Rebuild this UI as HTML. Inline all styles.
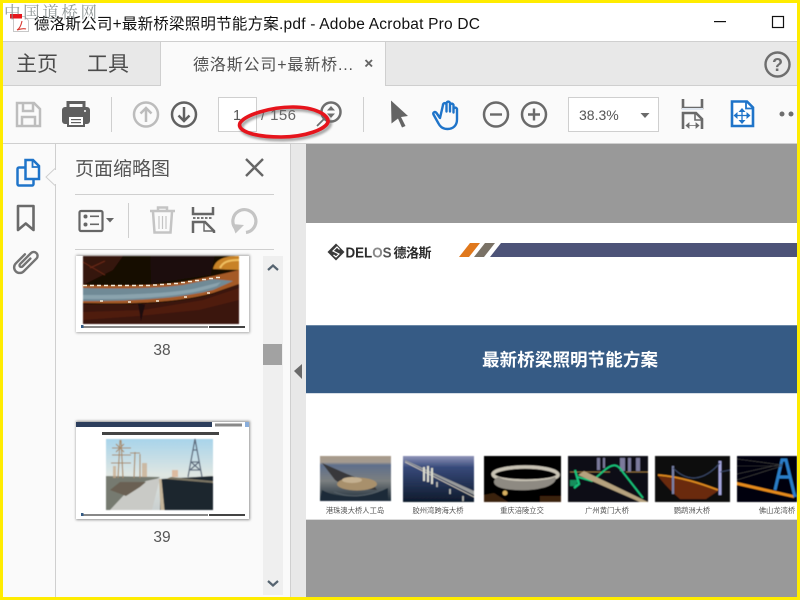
<!DOCTYPE html>
<html><head><meta charset="utf-8"><style>
html,body{margin:0;padding:0;width:800px;height:600px;overflow:hidden;background:#fff}
svg{display:block}
text{font-family:"Liberation Sans","Noto Sans CJK SC",sans-serif}
</style></head><body>
<svg width="800" height="600" viewBox="0 0 800 600" xmlns="http://www.w3.org/2000/svg">
<defs>
<filter id="b1" x="-10%" y="-10%" width="120%" height="120%"><feGaussianBlur stdDeviation="1.200"/></filter>
<filter id="b2" x="-20%" y="-20%" width="140%" height="140%"><feGaussianBlur stdDeviation="1"/></filter>
<filter id="b3" x="-20%" y="-20%" width="140%" height="140%"><feGaussianBlur stdDeviation=".6"/></filter>
<linearGradient id="sky" x1="0" y1="0" x2="0" y2="1"><stop offset="0" stop-color="#a8d4ea"/><stop offset=".5" stop-color="#dfe6e2"/><stop offset="1" stop-color="#c9cfcf"/></linearGradient>
<linearGradient id="sea" x1="0" y1="0" x2="0" y2="1"><stop offset="0" stop-color="#a89a8a"/><stop offset=".14" stop-color="#a39a90"/><stop offset=".2" stop-color="#5f6f8c"/><stop offset=".55" stop-color="#7b7f80"/><stop offset="1" stop-color="#1c2b38"/></linearGradient>
<linearGradient id="sea2" x1="0" y1="0" x2="0" y2="1"><stop offset="0" stop-color="#8f94b8"/><stop offset=".25" stop-color="#37497a"/><stop offset="1" stop-color="#0e1a2c"/></linearGradient>
</defs>

<rect width="800" height="600" fill="#fff"/>

<!-- tab bar -->
<rect x="3" y="41" width="794" height="1.500" fill="#cfcfcf"/>
<rect x="3" y="42" width="794" height="43" fill="#e8e8e8"/>
<rect x="160" y="42" width="226" height="44" fill="#fafafa"/>
<rect x="160" y="42" width="1" height="44" fill="#cfcfcf"/>
<rect x="385" y="42" width="1" height="44" fill="#cfcfcf"/>
<rect x="3" y="85" width="157" height="1" fill="#cfcfcf"/>
<rect x="386" y="85" width="411" height="1" fill="#cfcfcf"/>
<!-- toolbar -->
<rect x="3" y="86" width="794" height="57" fill="#fafafa"/>
<rect x="3" y="143" width="794" height="1" fill="#cfcfcf"/>

<!-- left nav + panel -->
<rect x="3" y="144" width="287" height="453" fill="#fafafa"/>
<rect x="55" y="144" width="1" height="453" fill="#cfcfcf"/>
<rect x="290" y="144" width="16" height="453" fill="#e8e8e8"/>
<rect x="290" y="144" width="1" height="453" fill="#cfcfcf"/>

<!-- doc area -->
<rect x="306" y="144" width="491" height="453" fill="#999"/>
<rect x="306" y="223" width="491" height="296" fill="#fff"/>
<rect x="306" y="519" width="491" height="1" fill="#dcdcdc"/>

<!-- title bar -->
<g>
<path d="M13.500 16.500h11l4 4v11h-15z" fill="#fff" stroke="#c8c8c8"/>
<rect x="10" y="14" width="12" height="4.500" fill="#e8161c"/>
<path d="M17 30c2-1 4-4 5-9M17 30c3-1 6-2 9-1" stroke="#d83a32" stroke-width="1.100" fill="none"/>
</g>
<text x="34" y="29" font-size="15.500" fill="#111" textLength="446" lengthAdjust="spacing">德洛斯公司+最新桥梁照明节能方案.pdf - Adobe Acrobat Pro DC</text>
<rect x="714" y="21" width="12" height="1.200" fill="#111"/>
<rect x="772.500" y="16.500" width="11" height="11" fill="none" stroke="#111" stroke-width="1.200"/>

<!-- tabs -->
<text x="16" y="71" font-size="21" fill="#4b4b4b">主页</text>
<text x="87" y="71" font-size="21" fill="#4b4b4b">工具</text>
<text x="193" y="70" font-size="16" fill="#505050" textLength="160" lengthAdjust="spacing">德洛斯公司+最新桥...</text>
<path d="M365.500 60l6.500 6.500M372 60l-6.500 6.500" stroke="#666" stroke-width="1.900"/>
<circle cx="777.500" cy="64.500" r="12" fill="none" stroke="#6e6e6e" stroke-width="2.400"/>
<text x="777.500" y="71" font-size="18" font-weight="bold" fill="#6e6e6e" text-anchor="middle">?</text>

<!-- toolbar icons -->
<g fill="none" stroke="#bdbdbd" stroke-width="2.500">
<path d="M17 103h17l6 6v17H17z"/><path d="M23 103v8h10v-8"/><path d="M22 126v-9h13v9"/>
</g>
<g>
<path d="M68 112v-9.500h16v9.500" fill="none" stroke="#5f5f5f" stroke-width="3"/>
<path d="M65 107h22a3 3 0 0 1 3 3v11a3 3 0 0 1-3 3h-3v-6H68v6h-3a3 3 0 0 1-3-3v-11a3 3 0 0 1 3-3z" fill="#5f5f5f"/>
<rect x="68" y="116" width="16" height="10" fill="#fff" stroke="#5f5f5f" stroke-width="2"/>
<rect x="71" y="119" width="10" height="1.200" fill="#5f5f5f"/><rect x="71" y="122" width="10" height="1.200" fill="#5f5f5f"/>
<circle cx="85" cy="111" r="1" fill="#fff"/>
</g>
<rect x="111" y="97" width="1" height="35" fill="#cfcfcf"/>
<circle cx="146" cy="114.500" r="12" fill="none" stroke="#bcbcbc" stroke-width="2.500"/>
<path d="M146 122v-14M140.500 113.500l5.500-5.500 5.500 5.500" fill="none" stroke="#bcbcbc" stroke-width="2.500"/>
<circle cx="184" cy="114.500" r="12" fill="none" stroke="#616161" stroke-width="2.500"/>
<path d="M184 107v14M178.500 115.500l5.500 5.500 5.500-5.500" fill="none" stroke="#616161" stroke-width="2.500"/>

<rect x="218.500" y="97.500" width="38" height="34" fill="#fff" stroke="#cfcfcf"/>
<text x="233" y="120" font-size="14.500" fill="#555">1</text>
<text x="261" y="120" font-size="15" fill="#666" textLength="35" lengthAdjust="spacing">/ 156</text>
<circle cx="331" cy="112" r="9.500" fill="none" stroke="#6e6e6e" stroke-width="2.500"/>
<path d="M331 106l4 4.500h-8zM331 118l4-4.500h-8z" fill="#6e6e6e"/>
<path d="M324 119l-7 7" stroke="#6e6e6e" stroke-width="1.800"/>

<path d="M240 123c5-8 30-16 53-16 22 0 36 8 35 15-2 7-22 15-47 15-23 0-45-5-41-14z" fill="none" stroke="#666" stroke-width="4" opacity=".55" transform="translate(2 2.500)" filter="url(#b2)"/>
<path d="M240 123c5-8 30-16 53-16 22 0 36 8 35 15-2 7-22 15-47 15-23 0-45-5-41-14z" fill="none" stroke="#e6141c" stroke-width="3.600"/>

<rect x="363" y="97" width="1" height="35" fill="#cfcfcf"/>
<path d="M391 100.500l17 15.500-7 1 4.500 9-3.500 1.500-4-9-6.500 5z" fill="#646464"/>
<path d="M440 118l-3.500-5c-1.500-2-4-.5-3 1.500l5 9c2 4 5 5.500 9 5.500 5.500 0 9.500-3.500 9.500-9.500v-10c0-2.500-3.500-2.500-3.500 0v3-7c0-2.500-3.500-2.500-3.500 0v6-8c0-2.500-3.500-2.500-3.500 0v8-6.500c0-2.500-3.500-2.500-3.500 0z" fill="none" stroke="#1f74c9" stroke-width="2.400" stroke-linejoin="round"/>
<circle cx="496" cy="114.500" r="12" fill="none" stroke="#6a6a6a" stroke-width="2.500"/>
<rect x="490" y="113.300" width="12" height="2.400" fill="#6a6a6a"/>
<circle cx="534" cy="114.500" r="12" fill="none" stroke="#6a6a6a" stroke-width="2.500"/>
<path d="M528 114.500h12M534 108.500v12" stroke="#6a6a6a" stroke-width="2.400"/>

<rect x="568.500" y="97.500" width="90" height="34" fill="#fff" stroke="#cfcfcf"/>
<text x="579" y="120" font-size="14" fill="#555">38.3%</text>
<path d="M640.500 113h9l-4.500 5z" fill="#6a6a6a"/>

<path d="M683 99v9h19v-9" fill="none" stroke="#6a6a6a" stroke-width="2.600"/>
<rect x="682" y="108" width="21" height="2" fill="#dfe6ef"/>
<path d="M683 129v-16h13l6 6v10" fill="none" stroke="#6a6a6a" stroke-width="2.600"/>
<path d="M695 113v7h7" fill="none" stroke="#6a6a6a" stroke-width="1.600"/>
<path d="M686 125.500h13M686 125.500l3-2.500v5zM699 125.500l-3-2.500v5z" fill="#6a6a6a" stroke="#6a6a6a" stroke-width=".8"/>

<path d="M732 101.500h15l6 6v18.500h-21z" fill="#fff" stroke="#1f74c9" stroke-width="2.600"/>
<path d="M746 101.500v7h7" fill="none" stroke="#1f74c9" stroke-width="1.800"/>
<path d="M742 108l3.500 4h-7zM742 124l3.500-4h-7zM733.500 115.500l4-3.500v7zM750.500 115.500l-4-3.500v7z" fill="#1f74c9"/>
<path d="M742 111v9M736 115.500h12" stroke="#1f74c9" stroke-width="1.300"/>
<circle cx="782" cy="114" r="2.500" fill="#6e6e6e"/><circle cx="791" cy="114" r="2.500" fill="#6e6e6e"/>

<!-- left nav icons -->
<rect x="17.500" y="167.500" width="16" height="18" rx="1.500" fill="#fafafa" stroke="#1f74c9" stroke-width="2.500"/>
<path d="M25.500 160h7.500l6 6v13h-13.500z" fill="#fafafa" stroke="#1f74c9" stroke-width="2.500"/>
<path d="M32.500 160v7h6.500" fill="none" stroke="#1f74c9" stroke-width="1.800"/>
<path d="M55 168.500l-9 8.500 9 8.500" fill="#fafafa" stroke="#cfcfcf"/>
<rect x="55" y="170" width="1.500" height="14" fill="#fafafa"/>
<path d="M18 206h15.500v24l-7.750-6.500-7.750 6.500z" fill="none" stroke="#6a6a6a" stroke-width="2.600" stroke-linejoin="round"/>
<path d="M-6 -5V10a6.500 6.500 0 0 0 13 0V-11a4.500 4.500 0 0 0-9 0V7a2 2 0 0 0 4 0V-6" fill="none" stroke="#747474" stroke-width="2.800" stroke-linecap="round" transform="translate(25.500 261) rotate(45) scale(.86)"/>

<!-- panel header -->
<text x="75" y="175" font-size="19" fill="#555" textLength="95" lengthAdjust="spacing">页面缩略图</text>
<path d="M246 159l17 17M263 159l-17 17" stroke="#666" stroke-width="2.400"/>
<rect x="75" y="194" width="199" height="1" fill="#cfcfcf"/>
<rect x="75" y="249" width="199" height="1" fill="#cfcfcf"/>

<!-- panel toolbar -->
<rect x="79.500" y="211" width="23" height="20" rx="1.500" fill="none" stroke="#666" stroke-width="2.200"/>
<circle cx="85.500" cy="216.500" r="2" fill="#666"/><circle cx="85.500" cy="224.500" r="2" fill="#666"/>
<rect x="90" y="215.500" width="9" height="1.600" fill="#666"/><rect x="90" y="223.500" width="9" height="1.600" fill="#666"/>
<path d="M106 218h8l-4 4.500z" fill="#666"/>
<rect x="128" y="203" width="1" height="35" fill="#cfcfcf"/>
<g fill="none" stroke="#c4c4c4" stroke-width="2.500">
<path d="M150 211h25M158 211v-3.500h9v3.500M153 212l1.500 20.500h16l1.500-20.500"/>
<path d="M159 216v13M162.500 216v13M166 216v13" stroke-width="1.200"/>
</g>
<path d="M193 207v7h20v-7" fill="none" stroke="#666" stroke-width="2.500"/>
<path d="M193 218h20" stroke="#666" stroke-width="1.800" stroke-dasharray="2.500 1.500"/>
<path d="M193 233v-11h12l9 9v2" fill="none" stroke="#666" stroke-width="2.500"/>
<path d="M204 222v9h9" fill="none" stroke="#666" stroke-width="1.400"/>
<path d="M236 229a11.500 11.500 0 1 1 10 3.500" fill="none" stroke="#c4c4c4" stroke-width="3.200"/>
<path d="M232 224l12 1-8.500 8.500z" fill="#c4c4c4"/>

<!-- thumb 38 -->
<rect x="76" y="255" width="174" height="78" fill="#777" opacity=".6" filter="url(#b1)"/>
<rect x="76" y="256" width="173" height="76" fill="#fff"/>
<g filter="url(#b3)">
<rect x="83" y="256" width="156" height="68" fill="#140705"/>
<path d="M83 256h40l-10 14-30 15z" fill="#35120a"/>
<path d="M150 256h65l-4 19-60 9z" fill="#1a0807"/>
<path d="M83 262l22 13M90 268l15-7" stroke="#6a2c16" fill="none"/>
<path d="M83 304c40 1 90 1 130-10l26-10v40H83z" fill="#3a1208"/>
<path d="M83 312l60-2 60-10 36-12v12l-40 10-60 6-56 4z" fill="#4f1c0a"/>
<path d="M83 285c30 1 70 1 100-3l30-6 26-6v14l-26 9c-40 11-90 11-130 10z" fill="#a55a28"/>
<path d="M83 288c30 1 70 1 100-3l30-6 20 2-20 9c-40 10-90 11-130 11z" fill="#6f8a96"/>
<path d="M83 295c40 0 80-1 110-6l28-7-4 4c-30 11-85 14-134 13z" fill="#8aa3ad"/>
<path d="M213 269c2-9 10-13 26-13v14z" fill="#c88228"/>
<path d="M220 268c3-6 8-8 19-8" stroke="#f0c060" stroke-width="2" fill="none"/>
<path d="M138 303l3 18 4-16z" fill="#1a0807"/>
</g>
<path d="M83 285.500h4m3 0h4m3 0h4m3 0h4m3 0h4m3 0h4m3 0h4m3 0h4m3 0h4m3 0h4m3-.500h4m3-.500h4m3-.500h4m3-.500h4m3-1h4m3-1h4m3-1h4m3-1h4m3-1h4m3-1h4" stroke="#f4ead8" stroke-width="1.600" fill="none"/>
<path d="M100 301h3m25 1h3m25-1h3m25-4h3m20-4h3" stroke="#f4ead8" stroke-width="1.500"/>
<rect x="81" y="326.500" width="127" height="1" fill="#111"/>
<rect x="81" y="325" width="2.500" height="3" fill="#345c86"/>
<rect x="209" y="326" width="36" height="2" fill="#444"/>
<text x="162" y="355" font-size="15.500" fill="#555" text-anchor="middle">38</text>

<!-- thumb 39 -->
<rect x="76" y="421" width="174" height="99" fill="#666" opacity=".7" filter="url(#b1)"/>
<rect x="76" y="422" width="173" height="97" fill="#fff"/>
<rect x="76" y="422" width="136" height="5" fill="#2c3e5d"/>
<rect x="215" y="423.500" width="27" height="3" fill="#888"/>
<rect x="245" y="422" width="4" height="5" fill="#8aaedb"/>
<rect x="102" y="432" width="117" height="3" fill="#444"/>
<g filter="url(#b3)">
<rect x="106" y="439" width="107" height="71" fill="url(#sky)"/>
<path d="M160 478H106v32h3l6-3z" fill="#b8bdbd"/>
<path d="M106 476l54 1-13 8-15 8-14 10-6 7h-6z" fill="#767a70"/>
<path d="M160 478l-14 3-22 14-14 15h42z" fill="#c9cac6"/>
<path d="M161 479l52-3v34h-53z" fill="#1c252e"/>
<path d="M159 479h2.500l3 31h-4z" fill="#c4b49a"/>
<path d="M166 479l47 4v-2l-42-4z" fill="#7a7464"/>
<path d="M110 490l10-8h26l-6 5-14 9z" fill="#6a6052"/>
<g fill="none" stroke="#a88a68" stroke-width="1.100">
<path d="M118 478l2-38M123 478l-2-38M112 448h19M112 455h19M111 463h20M134 478l1-26M140 478v-24M130 453h10M116 444l8 8M124 444l-8 8"/>
</g>
<path d="M113 466h3v12h-3zM142 463h5v14h-5z" fill="#c8a888" opacity=".7"/>
<g fill="none" stroke="#5d6a7c" stroke-width="1.300">
<path d="M188 477l7-38 7 38M191 462h8M189 470h12M193 450h4M190 470l9-8M200 470l-9-8"/>
</g>
<rect x="172" y="470" width="6" height="7" fill="#dcb090" opacity=".8"/>
</g>
<rect x="81" y="514.500" width="127" height="1" fill="#111"/>
<rect x="81" y="513" width="2.500" height="3" fill="#345c86"/>
<rect x="209" y="514" width="36" height="2" fill="#444"/>
<text x="162" y="542" font-size="15.500" fill="#555" text-anchor="middle">39</text>

<!-- scrollbar -->
<rect x="263" y="256" width="20" height="339" fill="#efefef"/>
<rect x="263" y="344" width="19" height="21" fill="#a2a2a2"/>
<path d="M268 270l5-4.500 5 4.500" fill="none" stroke="#566470" stroke-width="2.200"/>
<path d="M268 581l5 4.500 5-4.500" fill="none" stroke="#566470" stroke-width="2.200"/>
<path d="M294 371l8-7v15z" fill="#6a6a6a"/>

<!-- page 1 -->
<path d="M336 243.500l8.500 8.500-8.500 8.500-8.500-8.500z" fill="#3a3a3a"/>
<path d="M339.500 249.500l-2.500-2.500-4 4 6 3-3 3-2.500-2" stroke="#fff" stroke-width="1.200" fill="none"/>
<text x="345.500" y="257.500" font-size="15" font-weight="bold" fill="#2b2b2b" textLength="46" lengthAdjust="spacingAndGlyphs">DEL<tspan fill="#8a8a8a">O</tspan><tspan fill="#555">S</tspan></text>
<text x="393.500" y="257.500" font-size="13" font-weight="bold" fill="#2b2b2b" textLength="38" lengthAdjust="spacing">德洛斯</text>
<path d="M459 257l11-14h10l-11 14z" fill="#e0781c"/>
<path d="M474 257l11-14h10l-11 14z" fill="#7a7266"/>
<path d="M490 257l11-14h296v14z" fill="#4d5378"/>
<rect x="306" y="325" width="491" height="68" fill="#365b85"/>
<rect x="306" y="325" width="491" height="1" fill="#6b88a6"/>
<rect x="306" y="393" width="491" height="1" fill="#d5dde6"/>
<text x="570" y="366" font-size="17.500" font-weight="bold" fill="#fff" text-anchor="middle" textLength="176" lengthAdjust="spacing">最新桥梁照明节能方案</text>

<!-- bridge pics -->
<g filter="url(#b3)">
<rect x="320" y="456" width="71" height="45" fill="url(#sea)"/>
<path d="M322 463l25 11 26 10 4 6-30-2-12-8z" fill="#38383a"/>
<ellipse cx="357" cy="484" rx="20" ry="6.500" fill="#a8906c"/>
<ellipse cx="352" cy="480" rx="10" ry="3" fill="#c4b090"/>
<path d="M322 490c16 9 44 8 66-2v13h-68z" fill="#1e2c38"/>
<path d="M334 492c14 6 34 5 50-3" stroke="#556068" fill="none"/>
</g>

<g filter="url(#b3)">
<rect x="403" y="456" width="71" height="46" fill="url(#sea2)"/>
<path d="M405 461l69 34v-4l-69-31z" fill="#9a9c9c"/>
<path d="M405 462l69 35" stroke="#d8d0c0" stroke-width=".8"/>
<path d="M423 467h2v14h-2zM427 466h2v16h-2zM431 468h2v16h-2z" fill="#dcdcd0"/>
<path d="M437 482v5M450 489v5M463 496v5" stroke="#c0c0b8" stroke-width="1.600"/>
</g>

<g filter="url(#b3)">
<rect x="484" y="456" width="77" height="46" fill="#060504"/>
<path d="M493 474c2-5 20-7 32-7 16 0 33 3 33 8 0 4-16 6-32 6-16 0-33-2-33-7z" fill="none" stroke="#c8c2b4" stroke-width="3.500"/>
<path d="M494 482c0-3 3-5 5-5 6 6 48 5 56 0 3 3-3 9-13 11-14 4-48 3-48-6z" fill="#8e8a82"/>
<path d="M484 495l10-2 14 9h-24zM540 496h21v6h-21z" fill="#3a2410"/>
<circle cx="505" cy="493" r="2.500" fill="#d8b060"/>
</g>

<g filter="url(#b3)">
<rect x="568" y="456" width="80" height="46" fill="#090e13"/>
<path d="M597 458h3v12h-3zM603 458h2v10h-2zM620 458h5v13h-5zM628 458h3v14h-3zM636 458h4v13h-4z" fill="#7c7a9c"/>
<path d="M570 472h40M626 472h22" stroke="#8a6a3a"/>
<path d="M578 477l14 4 14-12c8-6 12-4 16 2l21 27" fill="none" stroke="#18c47c" stroke-width="1.800"/>
<path d="M575 470l4 14-5 4" fill="none" stroke="#18c47c" stroke-width="2.200"/>
<path d="M578 475l62 27h8l-64-31z" fill="#b6a27e"/>
<path d="M570 480h8l-2 6h-6z" fill="#18c47c" opacity=".7"/>
</g>

<g filter="url(#b3)">
<rect x="655" y="456" width="75" height="46" fill="#070a10"/>
<path d="M658 476c24 2 44 9 60 15l-12 8h-26c-8-7-16-15-22-23z" fill="#6a2c10"/>
<path d="M658 475c24 2 44 9 60 15" fill="none" stroke="#e08a1c" stroke-width="1.800"/>
<path d="M673 466v28" stroke="#7a83a8" stroke-width="2.200"/>
<path d="M720 461v34" stroke="#a8a8e0" stroke-width="2.800"/>
<path d="M673 468c14 14 30 14 47-5" fill="none" stroke="#3c4a68"/>
<path d="M720 472l10-2" stroke="#3c4a68"/>
</g>

<g filter="url(#b3)">
<rect x="737" y="456" width="60" height="46" fill="#05050a"/>
<path d="M737 482l56 13 1 3-57-13z" fill="#e88c1a"/>
<path d="M775 490l7-30h4l9 37M779 477h12" fill="none" stroke="#2b7ec9" stroke-width="3"/>
<path d="M737 459l45 6M737 466l45 0M737 474l45-10M737 480l45-14" stroke="#444" stroke-width=".6"/>
</g>

<g font-size="7.300" fill="#555">
<text x="355" y="513" text-anchor="middle">港珠澳大桥人工岛</text>
<text x="438" y="513" text-anchor="middle">胶州湾跨海大桥</text>
<text x="522" y="513" text-anchor="middle">重庆涪陵立交</text>
<text x="607" y="513" text-anchor="middle">广州黄门大桥</text>
<text x="692" y="513" text-anchor="middle">鹦鹉洲大桥</text>
<text x="777" y="513" text-anchor="middle">佛山龙湾桥</text>
</g>

<!-- yellow frame -->
<rect x="0" y="0" width="800" height="3" fill="#ffec00"/>
<rect x="0" y="597" width="800" height="3" fill="#ffec00"/>
<rect x="0" y="0" width="3" height="600" fill="#ffec00"/>
<rect x="797" y="0" width="3" height="600" fill="#ffec00"/>

<!-- watermark -->
<text x="4" y="18" font-size="16.500" fill="#808888" opacity=".85" textLength="93" lengthAdjust="spacing" style="font-family:'Liberation Serif','Noto Serif CJK SC',serif">中国道桥网</text>
</svg>
</body></html>
